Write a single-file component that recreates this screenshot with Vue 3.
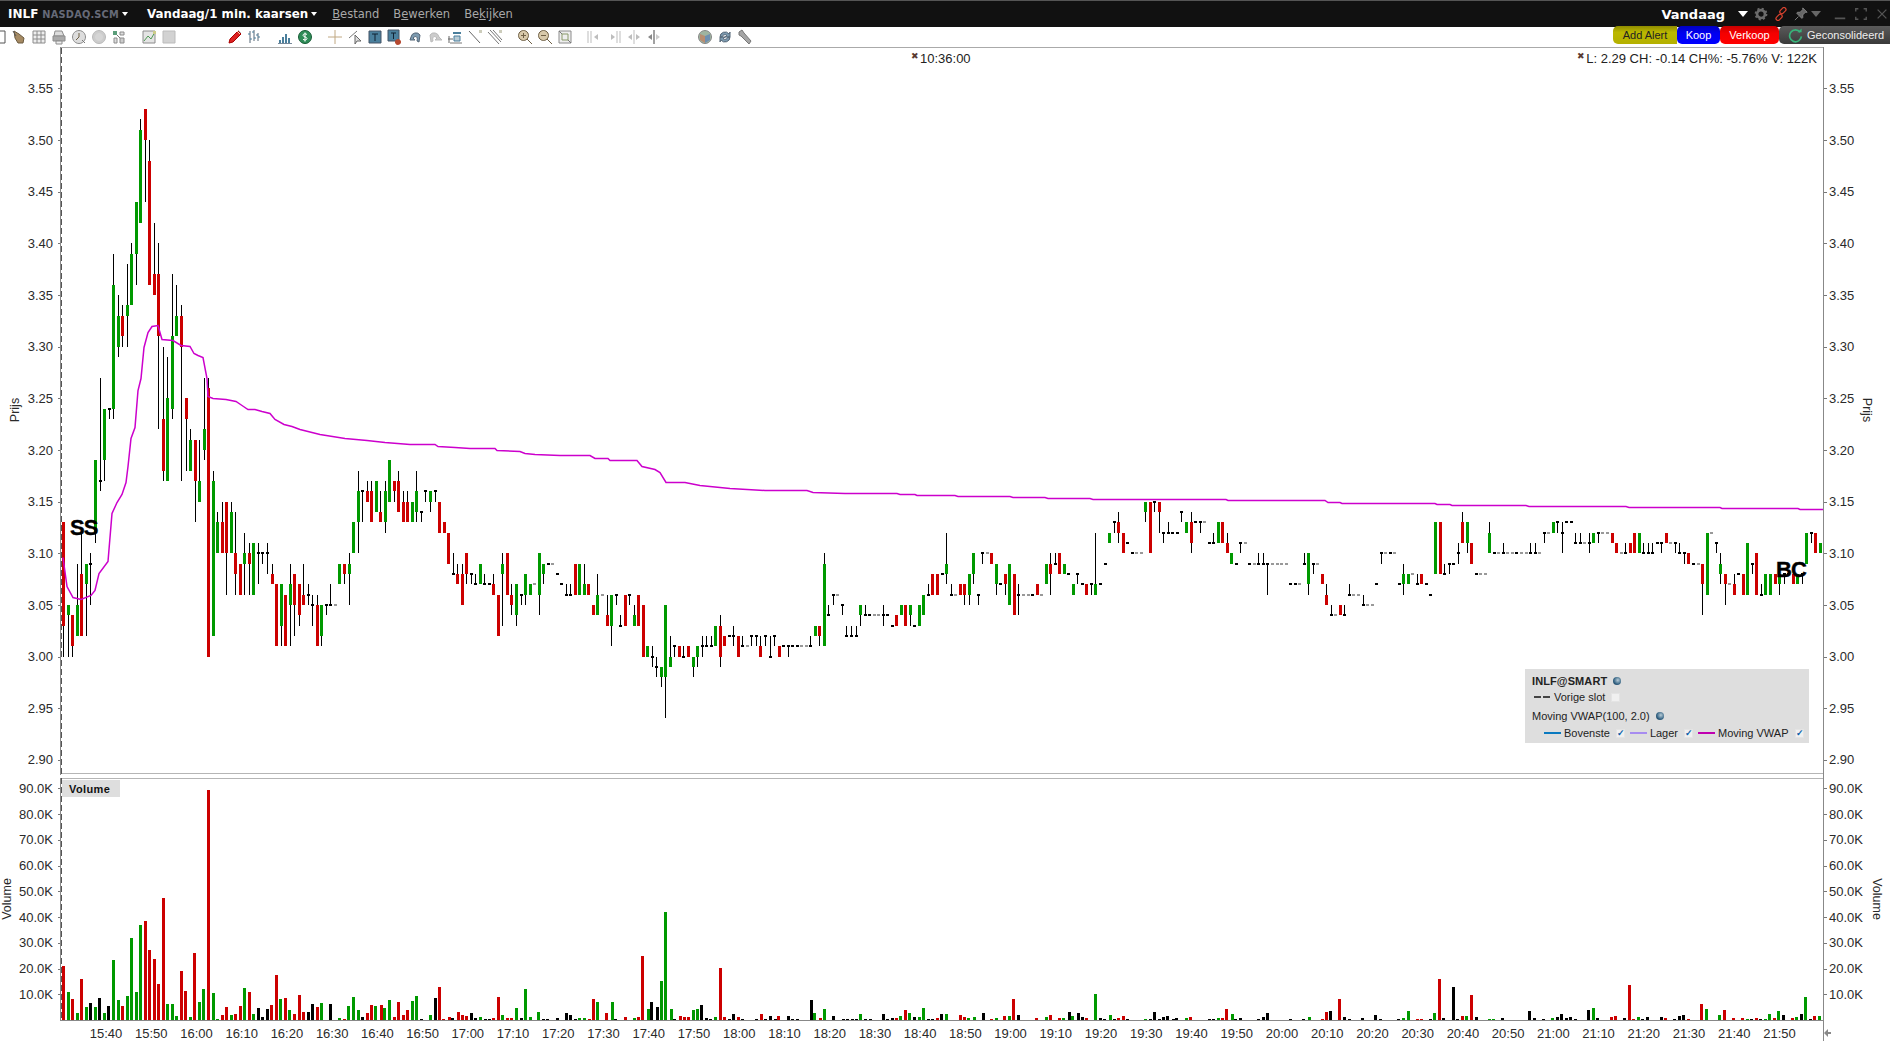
<script setup>
const C = { g: '#009900', r: '#cc0000', k: '#000000', n: '#999999' }
const raw = `
r313,303,313,300 g305,304,305,300 r304,301,304,300 g305,302,309,302 r308,302,312,302 g309,307,309,302 k309,,310,305 g319,312,319,311 k317,,327,316 g324,319,324,317 k324,,324,323 g336,324,339,323 g333,330,335,329 r333,331,334,330 g334,333,338,330 g339,334,340,334 g344,339,344,336 g351,342,352,342 r353,350,353,344 r348,336,350,336 r337,335,342,335 r337,331,340,322 r323,318,330,317 g325,317,329,317 g331,324,337,323 g333,331,336,331 r333,330,334,317 r325,323,325,318 g321,318,322,318 r321,317,321,313 g317,315,321,315 g322,320,327,319 r326,300,327,300 g317,302,318,302 g313,310,314,310 r313,310,315,310 r315,310,315,306 g314,310,315,310 r310,308,314,306 r309,306 g310,309,312,306 r310,309,311,306 g311,306 k310,,311,307 k310,,310,309 k310,,311,308 r308,307,309,307 r307,301 g307,303,307,301 r306,301 g307,305,309,301 r308,305,308,302 r307,304,307,303
r306,305,309,305 k306,,307,305 k305,,306,303 r305,301,306,301 g305,302,305,301 k305,,305,304 k305,,307,305 n305 g309,307 r309,308,309,307 g309,308,310,305 g313,310 g316,313,318,310 k316,,316,313 r316,315,317,315 r316,313,317,313 g317,314 r314,313,316,313 g316,313,317,312 g319,315 r317,316,317,315 r317,314,318,314 r315,313,316,313 r315,313,316,313 g315,313 g316,314,318,313 k314,,314,313 k316,,316,315 g316,315,316,314 k316,,316,315 r315,312 r313,312 r312,309
k308,,310,308 r308,307,309,307 r308,305,309,305 r310,308,310,307 k308,,308,307 k307,,308,307 g309,307 k307,,308,307 k307 r307,306,308,306 r306,302 g309,308,310,303 r310,306 r306,305,307,304 g307,304,307,303 k306,,306,305 g308,306,308,305 g307,306 n307 g310,306,310,304 g309,308,309,307 k309 n309 k308 k307 k306,,307,306 k306,,307,306 r309,306 g309,306 g307,306,309,306 r307,306 r305,304 g306,304,308,304 n306 r304,303,306,303 g306,303,306,301 k306,,306,305 k303,,304,303 r306,303 k306,,306,305 g304,303,305,303 r306,303 r305,300 g301,300 k300,,301,299 k299,,300,298 g299,298,299,297 g305,298,305,294 g300,299,302,299 k301,,301,300 r301,300 k300,,301,300 r301,300 g300,299,300,298 g301,300,301,299
k301,,302,300 k301,,302,301 k301,,302,301 g303,301 r303,300,304,299 r302,301 k302 k302,,303,301 r302,300 k301,,302,301 n301 k302,,302,301 k302,,302,301 r301,300,302,300 k302,,302,301 k300,,302,300 k302,,302,301 r301,300 k301 k301,,301,300 k301 k301 n301 n301 k301,,302,301 g303,302 r303,302,303,301 g309,301,310,301 k304,,305,304 k306,,306,305 n306 k305,,305,304 k302,,303,302 k302,,303,302 k302,,303,302 g305,304,305,303 k304,,305,304 k304 n304 n304 k304,,305,303 k304 k303 r304,303 g305,304 r305,303 g305,304,305,303 k303 g305,303 g306,304 k306,,307,306 r308,306 r308,306 k308 g309,308,312,307 k306,,307,306 n306 r307,306 r307,306,307,305 g308,306,308,305 g310,308,310,307 k306,,306,305 k310,,310,309 n310 r310,309 g309,307,309,306 k307 r308,307,308,306 g309,305 r308,304 k306,,307,304 n306 n306 k306 r307,306 n306 g309,307 r309,308,310,306 k309,,310,309 r310,308 g309,308 k308 g307,306 k308,,308,307 k307 r307,306 k307,,307,306 g307,306,312,306 k307 k309 g312,311 k313,,313,312 r313,312,314,311 r312,310 k311 k310 n310 n310 g315,314,315,313 r315,310
k315,,315,314 r315,314,315,312 k312,,312,311 k312,,313,312 k312 k312 k314,,314,313 g313,312 r313,311,314,310 k313 k313,,313,312 n313 k311 k311,,312,311 g313,311 r313,311 r311,310,312,310 g310,309 k309 k311,,311,310 n311 k309 n309 k309,,310,309 k309,,310,309 k309,,309,306 n309 n309 n309 n309 k307 k307 n307 k309,,310,309 g310,307,310,306 k309,,309,308 n309 r308,307 r306,305,307,305 k304,,305,304 n304 r305,304 k304,,305,304 k306,,307,306 n306 n306 k305,,306,305 n305 n305 k307 k310,,310,309 n310 k310 n310 k307 g308,307,309,306 g308,307 n308 k307,,308,307 r308,307 k307 k306 g313,308 r313,308 k308,,309,308 k309,,309,308 k309 k310,,311,309 r313,311,314,311 g313,311,313,310 r311,309 k308 n308 n308 g312,310,313,310 k310
n310 k310,,311,310 n310 n310 k310 n310 n310 k310,,311,310 k310,,311,310 n310 k312,,312,311 n312 g313,312 k313,,313,312 k312,,313,310 k313 k313 k311,,312,311 k311,,312,311 n311 k311,,312,310 g312,311 k312,,312,311 n312 n312 r312,311 r311,310 n310 k310,,311,310 r311,310 r312,310 g312,310 k310,,311,310 k310,,311,310 k310,,311,310 k311 k311,,311,310 r312,311 n311 k311,,311,310 k310,,311,310 k310,,310,309 r310,309 k309 n309 r309,307,309,304 g312,306 n312 k311,,311,310 g309,308,310,307 r308,307,308,305 n307 r307,306,308,306 k308 r308,306 g311,306 k309,,309,308 r310,306 k306,,307,306 g308,306 g308,306 r308,307 g308,307,308,306 k308,,308,307 k308 r308,307 g308,307 k308,,308,307 g312,309 k312,,312,311 r312,310 g311,310 r312,310
`
const py = p => Math.round(140 + (350 - p) * 10.33)
const bars = raw.trim().split(/\s+/).map((t, i) => {
  const c = t[0]
  const [a, b, h, l] = t.slice(1).split(',')
  const top = +a
  const bot = b ? +b : top
  const hi = h ? +h : top
  const lo = l ? +l : bot
  const x = Math.round(63.3 + 4.527 * i)
  const dash = c === 'k' || c === 'n'
  return {
    id: i,
    x,
    fill: C[c],
    bodyX: x - 1,
    bodyY: dash ? py(top) - 1 : py(top),
    bodyH: dash ? 2 : Math.max(2, py(bot) - py(top)),
    wickY: py(hi),
    wickH: py(lo) - py(hi),
    hasWick: lo < hi
  }
}).filter(b => b.x < 1823)

const volParse = (s, xf, hf) => s.trim().split(/\s+/).map(t => {
  const m = t.match(/^([\d.]+)([grk])([\d.]+)$/)
  const h = hf(+m[3])
  return { x: Math.round(xf(+m[1])), fill: C[m[2]], y: 1020 - h, h }
})
const volA = volParse(`190r21 205g10.8 217r8 232g2.7 244r15.8 259g5 271k6.5 286g5 298k8.5 313g2.7 325k5.4 340g23.2 355g7.7 367r5.4 382g9.2 394g32 409g10.8 421g36.7 436r38.5 448r27 463r23.6 475r14 490r47.4 502g6.2 517g6.2 529g1.5 544r19 556r11.2 571g1.1 583r26 598g7 610g12 625r89.5 640g10.4 652g.4 667r1.8 679r5 694g1.9 706r2.3 721r5.4 733g12.4 748r10.8 760g2.3 775k4.6 787k1.1 802k4.2 814r5.8 829r17.5 841g8 856r8.5 868g3.9 883r2.3 898r9.6 910r3 925k3 937k6.2 952r5 964g6.5`, x => x / 3, k => k * 2.575)
const volB = volParse(`0k48 12g6 18r3 24g42 30g69 36g30 42k9 48r21 54r45 59g42 66r45 71g36 77g60 83r9 89r54 95r15 101r30 107g57 113g72 119k3 131g15 137k66 143r99 148r3 155r9 160k6 167r24 172r15 178r12 184k21 190k6 196g9 202k3 208k3 213r6 220r69 225g15 231r6 237r6 243g36 249k6 255g93 261g9 272g24 278k3 284k3 296k6 308k21 314k15 320k3 326g6 332g6 338r3 344r63 349g54 361r21 368g54 373k3 385r9 397g6 403r9 408r192 415g33 420k54 427k39 433g117 438g324 445g33 450k3 457r12 462r9 468r9 474g30 480g33 485k45 491k6 497k3 503g9 509r156 515r9 521k3 527k18 533r9 539k3 557k3 563r18 569k3 575k12 581k3 586r12 598k12 604k3 610k3 628k60 633g21 640r6 645g33 657k12 670k3 676k3 682k3 687k3 693g18 699k3 705k3 722k18 728k3 734k6 740r6 745g12 752r30 757g21 763k9 769g9 775g36 781k3 787k3 793r6 799k18 805g18 823r15 829r9 834g6 841g9 853k21 864r3 870g6 881r12 887g12 893r63 899k15 923r6 935g9 941r15 953r6 958g6 965k24 970g12 977k21 982k9 988r6 1000g78 1006k6 1012k3 1019g15 1024k3 1030r6 1036r12 1042k3 1065g3 1071k3 1077k24 1083k3 1089k9 1094k12 1101k3 1106k6 1118g6 1124r9 1148k3 1154k3 1160g6 1165r6 1171r33 1178g18 1183k3 1189k6 1213k3 1219k9 1225k21 1255k3 1272k3 1279g9 1296r3 1302r24 1307k27 1319r63 1325k9 1331k3 1349k6 1366k15 1372k3 1395k3 1402g6 1408g27 1420r3 1426r3 1437k3 1443g21 1449r123 1455k6 1467k99 1473k3 1479r12 1485g12 1491r75 1497k9 1514g3 1520g3 1532k6`, x => 330 + x / 1.3067, v => v / 3)
const volC = volParse(`88k27 103k6 130k3 157g6 172k9 184k18 199k6 211k9 226k3 265k30 280g36 292k6 334r9 346r12 373k6 388r105 400r3 415g9 427k3 442k9 484k9 496r6 523k3 538k12 550k15 565r3 604r48 619g33 658g15 673r30 700r6 727r6 742g3 754k3 769r6 781k3 796g3 808g18 823r6 835g27 850k15 877r6 889g9 904k18 916g69 931k3 943r12 958g12 970r42`, x => 1500 + x / 3, v => v / 3)
const vols = [...volA, ...volB, ...volC].filter(v => v.x < 1823)

const vwap = '63,557 67,586 73,597 81,599 91,595 95,590 99,573 108,561 112,513 117,502 122,494 126,482 128,466 131,438 135,427 138,390 141,378 144,347 148,332 152,326 158,325 162,339 173,340 181,345 190,346 194,353 198,355 203,357 207,378 208,396 213,398 226,399 236,401 242,405 248,409 255,409 262,411 270,413 275,419 284,424 292,426 300,429 320,434 345,438 367,440 385,442 410,444 435,444 438,446 455,447 470,448 495,448 497,450 520,451 525,453 535,454 560,455 590,455 595,458 608,458 610,460 637,460 642,466 655,469 660,472 666,482 685,482 700,485 730,488 765,490 807,490 813,492 845,493 897,493 900,494 915,494 917,495 955,495 958,496 1010,496 1013,497 1045,497 1048,498 1090,498 1093,499 1150,499 1226,499 1228,500 1325,500 1328,502 1340,502 1342,503 1435,503 1437,504 1450,504 1452,505 1526,505 1529,506 1626,506 1629,507 1720,507 1722,508 1798,508 1800,509 1823,509'

const priceTicks = ['3.55','3.50','3.45','3.40','3.35','3.30','3.25','3.20','3.15','3.10','3.05','3.00','2.95','2.90'].map(t => ({ t, y: 140 + (3.5 - +t) * 1033 }))
const volTicks = [90,80,70,60,50,40,30,20,10].map(k => ({ t: k + '.0K', y: 1020 - k * 2.575 }))
const times = []
for (let i = 0; i < 38; i++) {
  const m = 15 * 60 + 40 + i * 10
  times.push({ t: `${Math.floor(m / 60)}:${String(m % 60).padStart(2, '0')}`, x: 106 + i * 45.23 })
}

const G = '#8c8c8c', B = '#6f6045', L = '#4a7f9c', D = '#555555', T = '#c0a882', P = '#bdbdbd'
const I = {
  open: [['M1 2h13v12H1z', '#fff', D], ['M5 8l4-3v6z', '#c8502a', 'none']],
  hand: [['M3 2l5 3 5 4-1 5-5 0-3-5z', '#a58a63', '#6b5a40'], ['M2 2l3 5', 'none', '#555']],
  grid: [['M2 2h12v12H2z', '#eee', G], ['M2 6h12M2 10h12M6 2v12M10 2v12', 'none', G]],
  print: [['M4 2l7 0 2 5H3z', '#ddd', G], ['M2 7h12v5H2z', '#aaa', G], ['M5 12h6v3H5z', '#eee', G]],
  clock: [['M8 1.5a6.5 6.5 0 1 0 .01 0z', '#ddd', G], ['M8 4v4l-3 3', 'none', B], ['M11 11l3 3', 'none', '#777']],
  disc: [['M8 1.5a6.5 6.5 0 1 0 .01 0z', '#ccc', '#bbb'], ['M8 4a4 4 0 1 0 .01 0z', '#d5d5d5', 'none']],
  pts: [['M2 2h4v4H2z', '#5b9e7a', 'none'], ['M9 3h4v3H9z', '#ddd', G], ['M3 9h3v5H3z', '#ddd', G], ['M9 9h4v5H9z', '#ccc', G], ['M6 6l3 3', 'none', '#777']],
  chart: [['M2 2h12v12H2z', '#e4e4e4', G], ['M3 12l4-5 3 3 4-7', 'none', '#4f9a55'], ['M12 2h3v3h-3z', '#cc8', 'none']],
  blank: [['M2 2h12v12H2z', '#d2d2d2', '#bbb']],
  pen: [['M3 14l1-4 8-8 3 3-8 8z', '#d22', '#a00'], ['M11 2l3 3', 'none', '#f3e0c0'], ['M12 1l3 3', 'none', '#bbb']],
  ohlc: [['M4 2v12M8 1v11M12 4v8', 'none', '#567'], ['M2 5h2M4 10h2M6 3h2M8 9h2M10 6h2M12 8h2', 'none', L]],
  vol: [['M2 14v-3h2v3zM5 14v-6h2v6zM8 14v-9h2v9zM11 14v-5h2v5z', L, 'none'], ['M1 14.5h14', 'none', '#789']],
  dollar: [['M8 1.5a6.5 6.5 0 1 0 .01 0z', '#2e8b57', '#1c5f3a'], ['M10 5.5c-1-1-4-1-4 .8s4 1.4 4 3.2-3 1.8-4 .8M8 3.5v9', 'none', '#fff']],
  cross: [['M8 1v14M1 8h14', 'none', T]],
  dcross: [['M2 9l8-7', 'none', '#777'], ['M8 6l0 9 2-3 4 0z', '#ddd', '#666']],
  t: [['M2 2h12v12H2z', L, '#456'], ['M5 5h6M8 5v7', 'none', '#123']],
  tr: [['M1 1h11v11H1z', L, '#456'], ['M4 4h5M6.5 4v6', 'none', '#123'], ['M11 10a3 3 0 1 0 .01 0z', '#b5482f', 'none']],
  undo: [['M4 8a5 5 0 0 1 9-2l-1 7-2-1c1-4-1-6-4-3l2 2H3z', '#7d9bb0', '#567']],
  redo: [['M12 8a5 5 0 0 0-9-2l1 7 2-1c-1-4 1-6 4-3l-2 2h7z', '#ccc', '#bbb']],
  cols: [['M1 10h5M2 7v7', 'none', '#666'], ['M6 3h8v2H6z', L, 'none'], ['M7 7h6v5H7z', '#b9ccd6', L], ['M3 14h12', 'none', '#777']],
  line: [['M2 2l11 12', 'none', '#666'], ['M12 1h3v3h-3z', '#ccb', 'none']],
  lines: [['M1 3l11 12M3 1l11 12M6 1l9 10', 'none', '#777'], ['M12 1h3v3h-3z', '#ccb', 'none']],
  zin: [['M6.5 1.5a5 5 0 1 0 .01 0z', '#d8c9aa', B], ['M10 10l5 5', 'none', B], ['M4 6.5h5M6.5 4v5', 'none', B]],
  zout: [['M6.5 1.5a5 5 0 1 0 .01 0z', '#d8c9aa', B], ['M10 10l5 5', 'none', B], ['M4 6.5h5', 'none', B]],
  fit: [['M2 2h12v12H2z', '#eee', G], ['M5 5h6v6H5z', 'none', '#8a9a6a'], ['M2 2l3 3M14 14l-3-3', 'none', '#777']],
  m1: [['M5 2v12', 'none', P], ['M8 8l4-3v6z', P, 'none'], ['M2 2v12', 'none', P]],
  m2: [['M11 2v12', 'none', P], ['M9 8l-4-3v6z', P, 'none'], ['M14 2v12', 'none', P]],
  m3: [['M8 1v14', 'none', P], ['M2 8l4-3v6zM14 8l-4-3v6z', P, 'none']],
  m4: [['M8 1v14', 'none', '#444'], ['M2 8l4-3v6z', '#888', 'none'], ['M14 8l-4-3v6z', '#ccc', 'none']],
  shield: [['M8 1.5a6.5 6.5 0 1 0 .01 0z', '#9fb3a0', '#888'], ['M3 5l5 2v7l-5-3z', '#b88c70', 'none'], ['M8 7l5-2v6l-5 3z', '#6e8fb0', 'none']],
  refresh: [['M3 8a5 5 0 0 1 9-3l1-2v5h-5l2-1.5a3 3 0 0 0-5 1.5zM13 8a5 5 0 0 1-9 3l-1 2V8h5l-2 1.5a3 3 0 0 0 5-1.5z', '#7d9bb0', '#567']],
  wrench: [['M2 3l3-2 2 3 7 8-2 3-8-8-2-1z', '#a5a5a5', '#777']]
}
const groups = [
  { ml: -9, icons: ['open', 'hand', 'grid', 'print', 'clock', 'disc', 'pts'] },
  { ml: 14, icons: ['chart', 'blank'] },
  { ml: 49, icons: ['pen', 'ohlc'] },
  { ml: 15, icons: ['vol', 'dollar'] },
  { ml: 14, icons: ['cross', 'dcross', 't', 'tr', 'undo', 'redo', 'cols', 'line', 'lines'] },
  { ml: 14, icons: ['zin', 'zout', 'fit'] },
  { ml: 13, icons: ['m1', 'm2', 'm3', 'm4'] },
  { ml: 35, icons: ['shield', 'refresh', 'wrench'] }
]
</script>

<template>
  <div class="page">
    <header class="topbar">
      <span class="sym">INLF</span>
      <span class="exch">NASDAQ.SCM</span>
      <span class="tri small"></span>
      <span class="title">Vandaag/1 min. kaarsen</span>
      <span class="tri small"></span>
      <nav class="menu">
        <span><u>B</u>estand</span>
        <span>B<u>e</u>werken</span>
        <span>Be<u>k</u>ijken</span>
      </nav>
      <div class="topright">
        <span class="range">Vandaag</span>
        <span class="tri big"></span>
        <svg class="ctl" viewBox="0 0 16 16">
          <circle cx="8" cy="8" r="4.5" fill="none" stroke="#6b6b6b" stroke-width="3" />
          <circle cx="8" cy="8" r="6.3" fill="none" stroke="#6b6b6b" stroke-width="2" stroke-dasharray="2.4 2.55" />
        </svg>
        <svg class="ctl" viewBox="0 0 16 16">
          <g fill="none" stroke="#d9432f" stroke-width="1.4">
            <rect x="8" y="0" width="4.5" height="8" rx="2.2" transform="rotate(45 10 4)" />
            <rect x="3.5" y="8" width="4.5" height="8" rx="2.2" transform="rotate(45 6 12)" />
          </g>
        </svg>
        <svg class="ctl" viewBox="0 0 16 16">
          <path d="M10 1l5 5-2 0-3 3 0 3-1 1-6-6 1-1 3 0 3-3zM5 11l-4 4" fill="#666" stroke="#8a8a8a" />
        </svg>
        <span class="tri grey"></span>
        <svg class="ctl win first" viewBox="0 0 16 16"><path d="M2 13h12" stroke="#555" stroke-width="2" /></svg>
        <svg class="ctl win" viewBox="0 0 16 16"><path d="M2 5V2h3M11 2h3v3M14 11v3h-3M5 14H2v-3" fill="none" stroke="#555" stroke-width="1.6" /></svg>
        <svg class="ctl win" viewBox="0 0 16 16"><path d="M3 3l10 10M13 3L3 13" stroke="#555" stroke-width="1.5" /></svg>
      </div>
    </header>

    <div class="toolbar">
      <div class="tools">
        <div v-for="(g, gi) in groups" :key="gi" class="tgroup" :style="{ marginLeft: g.ml + 'px' }">
          <svg v-for="n in g.icons" :key="n" class="ticon" viewBox="0 0 16 16">
            <path v-for="(p, pi) in I[n]" :key="pi" :d="p[0]" :fill="p[1]" :stroke="p[2]" />
          </svg>
        </div>
      </div>
      <div class="actions">
        <button class="btn alert">Add Alert</button>
        <button class="btn buy">Koop</button>
        <button class="btn sell">Verkoop</button>
        <button class="btn cons">
          <svg class="ring" viewBox="0 0 16 16">
            <path d="M13 4.5A6.3 6.3 0 1 0 14.3 9" fill="none" stroke="#38b37a" stroke-width="1.8" />
            <path d="M10 4.5h4.5V0.5z" fill="#38b37a" />
          </svg>
          Geconsolideerd
        </button>
      </div>
    </div>

    <div class="charts">
      <section class="pane price">
        <svg class="canvas" width="1890" height="728" viewBox="0 47 1890 728">
          <g class="crisp">
            <rect x="60" y="47" width="1764" height="1" fill="#aaaaaa" />
            <rect x="60" y="773" width="1764" height="1" fill="#b5b5b5" />
            <rect x="60" y="47" width="1" height="728" fill="#888888" />
            <line x1="61.5" y1="48" x2="61.5" y2="775" stroke="#555555" stroke-dasharray="6 3" />
            <rect x="1823" y="47" width="1" height="728" fill="#888888" />
            <g v-for="t in priceTicks" :key="t.t">
              <rect x="58" :y="Math.round(t.y)" width="2" height="1" fill="#777777" />
              <rect x="1824" :y="Math.round(t.y)" width="3" height="1" fill="#777777" />
            </g>
            <g v-for="b in bars" :key="b.id">
              <rect v-if="b.hasWick" :x="b.x" :y="b.wickY" width="1" :height="b.wickH" fill="#000000" />
              <rect :x="b.bodyX" :y="b.bodyY" width="3" :height="b.bodyH" :fill="b.fill" />
            </g>
          </g>
          <polyline :points="vwap" transform="translate(0 .5)" fill="none" stroke="#cc00cc" stroke-width="1.5" />
          <g class="axis">
            <text v-for="t in priceTicks" :key="t.t" x="53" :y="t.y" dy=".36em" text-anchor="end">{{ t.t }}</text>
            <text v-for="t in priceTicks" :key="'r' + t.t" x="1829" :y="t.y" dy=".36em">{{ t.t }}</text>
            <text class="side" transform="translate(19 410) rotate(-90)" text-anchor="middle">Prijs</text>
            <text class="side" transform="translate(1863 410) rotate(90)" text-anchor="middle">Prijs</text>
          </g>
          <text class="mark" x="70" y="535">SS</text>
          <text class="mark" x="1776" y="577">BC</text>
        </svg>
        <div class="stamp">
          <span class="x">✖</span>10:36:00
        </div>
        <div class="info">
          <span class="x">✖</span>L: 2.29 CH: -0.14 CH%: -5.76% V: 122K
        </div>
        <div class="legend">
          <div class="lrow head">
            <b>INLF@SMART</b><span class="globe"></span>
          </div>
          <div class="lrow">
            <span class="dashes"><i></i><i></i></span>
            <span>Vorige slot</span><span class="cb"></span>
          </div>
          <div class="lrow">
            <span>Moving VWAP(100, 2.0)</span><span class="globe"></span>
          </div>
          <div class="lrow series">
            <span class="ln blue"></span><span>Bovenste</span><span class="cb on">✓</span>
            <span class="ln lilac"></span><span>Lager</span><span class="cb on">✓</span>
            <span class="ln mag"></span><span>Moving VWAP</span><span class="cb on">✓</span>
          </div>
        </div>
      </section>

      <section class="pane volume">
        <svg class="canvas" width="1890" height="266" viewBox="0 775 1890 266">
          <g class="crisp">
            <rect x="60" y="778" width="1764" height="1" fill="#b5b5b5" />
            <rect x="60" y="778" width="1" height="243" fill="#888888" />
            <line x1="61.5" y1="778" x2="61.5" y2="1020" stroke="#555555" stroke-dasharray="6 3" />
            <rect x="1823" y="775" width="1" height="266" fill="#888888" />
            <g v-for="t in volTicks" :key="t.t">
              <rect x="58" :y="Math.round(t.y)" width="2" height="1" fill="#777777" />
              <rect x="1824" :y="Math.round(t.y)" width="3" height="1" fill="#777777" />
            </g>
            <rect v-for="(v, i) in vols" :key="i" :x="v.x - 1" :y="v.y" width="3" :height="v.h" :fill="v.fill" />
            <rect x="60" y="1020" width="1764" height="1" fill="#888888" />
          </g>
          <g class="axis">
            <text v-for="t in volTicks" :key="t.t" x="53" :y="t.y" dy=".36em" text-anchor="end">{{ t.t }}</text>
            <text v-for="t in volTicks" :key="'r' + t.t" x="1829" :y="t.y" dy=".36em">{{ t.t }}</text>
            <text v-for="t in times" :key="t.t" :x="t.x" y="1037.5" text-anchor="middle">{{ t.t }}</text>
            <text class="side" transform="translate(11 899) rotate(-90)" text-anchor="middle">Volume</text>
            <text class="side" transform="translate(1873 899) rotate(90)" text-anchor="middle">Volume</text>
          </g>
          <path d="M1824 1033l4-4v3h3v2h-3v3z" fill="#888888" />
        </svg>
        <div class="volbadge">Volume</div>
      </section>
    </div>
  </div>
</template>

<style>
html, body { margin: 0; background: #ffffff; overflow: hidden; }
</style>

<style scoped>
.page {
  width: 1890px;
  height: 1041px;
  display: flex;
  flex-direction: column;
  overflow: hidden;
  font-family: "Liberation Sans", Arial, sans-serif;
  background: #fff;
}
.topbar {
  height: 26px;
  border-top: 1px solid #555;
  background: #111;
  display: flex;
  align-items: center;
  padding-left: 8px;
  color: #fff;
  font-family: "DejaVu Sans", sans-serif;
  white-space: nowrap;
}
.sym { font-weight: 700; font-size: 12px; }
.exch { font-weight: 700; font-size: 9.8px; color: #666a78; margin-left: 4px; letter-spacing: .2px; }
.title { font-weight: 700; font-size: 11.85px; margin-left: 19px; }
.tri { width: 0; height: 0; border-style: solid; border-color: #fff transparent transparent; }
.tri.small { border-width: 4px 3.5px 0; margin-left: 3px; }
.tri.big { border-width: 6px 5px 0; margin-left: 13px; }
.tri.grey { border-width: 6px 5px 0; border-top-color: #666; margin-left: 3px; }
.menu { display: flex; gap: 14px; margin-left: 15px; font-size: 11.5px; color: #a8a8a8; }
.topright { margin-left: auto; display: flex; align-items: center; padding-right: 1px; }
.range { font-weight: 700; font-size: 13px; }
.ctl { width: 14px; height: 14px; margin-left: 6px; }
.win { margin-left: 7px; }
.win.first { margin-left: 12px; }
.toolbar {
  height: 20px;
  display: flex;
  justify-content: space-between;
  align-items: flex-start;
}
.tools { display: flex; padding-top: 2px; }
.tgroup { display: flex; gap: 4px; }
.ticon { width: 16px; height: 16px; flex: none; }
.actions { display: flex; margin-top: -1px; }
.btn {
  height: 18px;
  padding: 0;
  border: 0;
  font-family: "Liberation Sans", sans-serif;
  font-size: 11px;
  text-align: center;
}
.alert { width: 64px; border-radius: 5px 0 0 5px; color: #222; background: linear-gradient(#8e8b00, #bcb800 35%, #b4b000); }
.buy { width: 43px; border-radius: 5px; color: #fff; background: linear-gradient(#0000c0, #0000f0 40%, #0000ff); }
.sell { width: 59px; border-radius: 5px; color: #fff; background: linear-gradient(#c80000, #f40000 40%, #ff0000); }
.cons {
  width: 111px;
  border-radius: 5px 0 0 5px;
  color: #eee;
  background: linear-gradient(#5a5a5a, #3a3a3a);
  display: flex;
  align-items: center;
  gap: 4px;
  padding-left: 9px;
  white-space: nowrap;
}
.ring { width: 15px; height: 15px; flex: none; }
.charts { flex: 1; display: flex; flex-direction: column; }
.pane { position: relative; }
.price { height: 728px; }
.volume { height: 266px; }
.canvas { display: block; }
.crisp { shape-rendering: crispEdges; }
.axis text { font-family: "Liberation Sans", sans-serif; font-size: 13px; fill: #2a2a2a; }
.axis .side { font-size: 12.5px; }
.mark { font-family: "Liberation Sans", sans-serif; font-weight: 700; font-size: 22px; letter-spacing: -1px; fill: #000; stroke: #000; stroke-width: .4px; }
.stamp, .info {
  position: absolute;
  top: 1px;
  font-size: 13px;
  color: #222;
  line-height: 16px;
  white-space: nowrap;
}
.stamp { left: 911px; }
.info { right: 73px; }
.x { font-size: 9px; color: #5a3a32; vertical-align: 4px; margin-right: 1px; }
.legend {
  position: absolute;
  left: 1525px;
  top: 622px;
  width: 284px;
  height: 74px;
  box-sizing: border-box;
  background: #dedede;
  padding: 4px 7px;
  font-size: 11px;
  color: #222;
}
.lrow { display: flex; align-items: center; height: 16px; white-space: nowrap; }
.lrow:nth-child(3) { margin-top: 3px; }
.lrow:nth-child(4) { margin-top: 1px; }
.lrow.head b { font-size: 11px; letter-spacing: .1px; }
.globe {
  width: 8px;
  height: 8px;
  border-radius: 50%;
  margin-left: 6px;
  background: radial-gradient(circle at 60% 40%, #b9cdd8, #2f5f80 60%, #1d3a50);
}
.dashes { display: flex; gap: 2px; margin: 0 4px 0 2px; }
.dashes i { width: 7px; height: 2px; background: #444; }
.cb {
  flex: none;
  width: 7px;
  height: 7px;
  margin-left: 6px;
  background: #f0f0f0;
  border: 1px solid #e4e4e4;
  font-size: 9px;
  line-height: 7px;
  text-align: center;
  color: #0a5fa8;
  font-weight: 700;
}
.series { padding-left: 12px; }
.ln { flex: none; width: 17px; height: 2px; margin-right: 3px; }
.series .cb { margin-left: 6px; }
.series .cb + .ln { margin-left: 5px; }
.blue { background: #0a7ac0; }
.lilac { background: #a78cf0; }
.mag { background: #c000b0; }
.volbadge {
  position: absolute;
  left: 62px;
  top: 5px;
  width: 58px;
  height: 17px;
  box-sizing: border-box;
  padding-left: 7px;
  background: #dedede;
  font-size: 11px;
  font-weight: 700;
  line-height: 18px;
  letter-spacing: .4px;
  color: #111;
}
</style>
